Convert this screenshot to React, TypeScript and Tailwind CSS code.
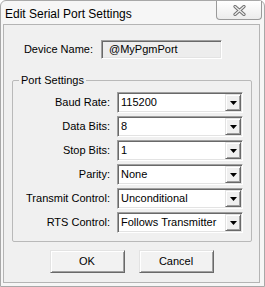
import React from "react";

const rows = [
  { label: "Baud Rate:", value: "115200" },
  { label: "Data Bits:", value: "8" },
  { label: "Stop Bits:", value: "1" },
  { label: "Parity:", value: "None" },
  { label: "Transmit Control:", value: "Unconditional" },
  { label: "RTS Control:", value: "Follows Transmitter" },
];

const ArrowDown = () => (
  <svg width="7" height="4" viewBox="0 0 7 4">
    <path d="M0 0h7L3.5 4z" fill="#000" />
  </svg>
);

const Combo: React.FC<{ value: string }> = ({ value }) => (
  <div className="flex h-[21px] w-[126px] items-center border border-[#a0a0a0] border-r-white border-b-white bg-white shadow-[inset_1px_1px_0_#696969,inset_-1px_-1px_0_#e3e3e3]">
    <span className="flex-1 truncate pl-[3px] leading-none">{value}</span>
    <div className="mr-[1px] flex h-[17px] w-[16px] items-center justify-center border border-[#e3e3e3] border-r-[#696969] border-b-[#696969] bg-[#f0f0f0] shadow-[inset_1px_1px_0_#fff,inset_-1px_-1px_0_#a0a0a0]">
      <ArrowDown />
    </div>
  </div>
);

const Button: React.FC<{ children: React.ReactNode }> = ({ children }) => (
  <button className="flex h-[23px] w-[75px] items-center justify-center border border-[#e3e3e3] border-r-[#696969] border-b-[#696969] bg-[#f2f2f2] shadow-[inset_1px_1px_0_#fff,inset_-1px_-1px_0_#a0a0a0]">
    {children}
  </button>
);

export default function App() {
  return (
    <div className="flex h-[287px] w-[265px] flex-col rounded-t-[6px] border border-[#a8a8a8] bg-[#f6f6f6] font-['Liberation_Sans',Arial,sans-serif] text-[11px] text-black">
      {/* title bar */}
      <div className="flex h-[23px] shrink-0 items-start justify-between">
        <span className="mt-[4px] pl-[4px] text-[12px]">Edit Serial Port Settings</span>
        <div className="mr-[2px] flex h-[19px] w-[46px] items-center justify-center rounded-b-[4px] border border-t-0 border-[#9a9a9a] bg-gradient-to-b from-white to-[#ececec]">
          <svg width="13" height="11" viewBox="0 0 13 11">
            <path d="M2 1.5l9 8M11 1.5l-9 8" stroke="#6f6f6f" strokeWidth="3.2" strokeLinecap="round" />
            <path d="M2 1.5l9 8M11 1.5l-9 8" stroke="#eeeeee" strokeWidth="1.3" strokeLinecap="round" />
          </svg>
        </div>
      </div>

      {/* client area */}
      <div className="mb-[3px] ml-[2px] mr-[4px] flex flex-1 flex-col border border-[#b4b4b4] bg-[#f0f0f0]">
        <div className="mt-[15px] flex items-center">
          <span className="w-[89px] text-right">Device Name:</span>
          <div className="ml-[8px] flex h-[19px] w-[121px] items-center border border-[#a0a0a0] border-r-white border-b-white bg-[#ededed] pl-[7px] shadow-[inset_1px_1px_0_#696969,inset_-1px_-1px_0_#e3e3e3]">
            @MyPgmPort
          </div>
        </div>

        <div className="relative ml-[8px] mt-[21px] w-[240px] rounded-[2px] border border-[#b9b9b9] px-[6px] pb-[8px] pt-[11px]">
          <span className="absolute -top-[7px] left-[6px] bg-[#f0f0f0] px-[2px] leading-[13px]">Port Settings</span>
          <div className="flex flex-col gap-[3px]">
            {rows.map((r) => (
              <div key={r.label} className="flex items-center gap-[7px]">
                <span className="w-[91px] text-right">{r.label}</span>
                <Combo value={r.value} />
              </div>
            ))}
          </div>
        </div>

        <div className="mt-[8px] flex justify-center gap-[14px]">
          <Button>OK</Button>
          <Button>Cancel</Button>
        </div>
      </div>
    </div>
  );
}
